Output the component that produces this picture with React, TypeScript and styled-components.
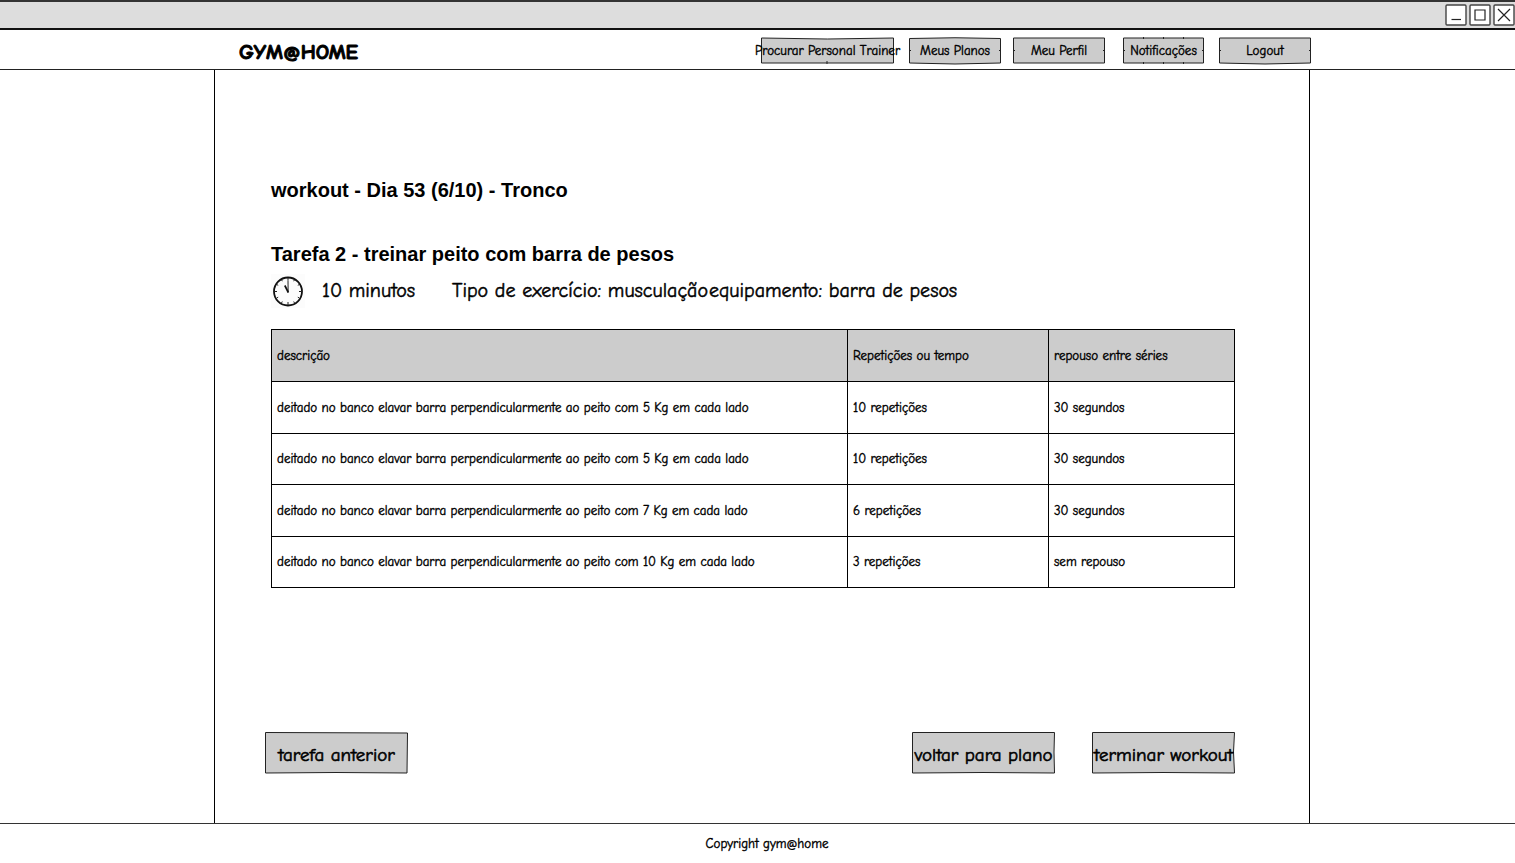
import React from "react";
import styled, { createGlobalStyle } from "styled-components";

const hand = `"Comic Sans MS", "Comic Neue", Lato, "Open Sans", sans-serif`;
const ink = "#000";
const fill = "#ccc";

const GlobalStyle = createGlobalStyle`
  *, *::before, *::after { box-sizing: border-box; }
  body {
    margin: 0;
    background: #fff;
    color: ${ink};
    font-family: ${hand};
    font-size: 13px;
    font-variant-ligatures: none;
    -webkit-text-stroke: 0.4px ${ink};
  }
`;

const Page = styled.div`
  display: flex;
  flex-direction: column;
  min-height: 100vh;
`;

const TitleBar = styled.div`
  display: flex;
  justify-content: flex-end;
  align-items: center;
  gap: 2px;
  height: 30px;
  background: #ddd;
  border-top: 2px solid #333;
  border-bottom: 2px solid #111;
`;

const WindowButton = styled.button`
  display: flex;
  width: 22px;
  height: 22px;
  padding: 0;
  border: 0;
  background: none;
`;

const Header = styled.header`
  display: flex;
  justify-content: space-between;
  align-items: center;
  height: 40px;
  padding: 2px 204px 0 239px;
  border-bottom: 1px solid #222;
`;

const Logo = styled.a`
  color: ${ink};
  font-size: 21px;
  font-weight: 700;
  line-height: 32px;
  text-decoration: none;
  padding-top: 2px;
  -webkit-text-stroke: 1px ${ink};
`;

const Nav = styled.nav`
  display: grid;
  grid-template-columns: 148px 104px 110px 96px 92px;
`;

const SketchButton = styled.button<{ $width: number; $large?: boolean }>`
  position: relative;
  display: flex;
  justify-content: center;
  align-items: center;
  width: ${(p) => p.$width}px;
  height: ${(p) => (p.$large ? 42 : 27)}px;
  padding: ${(p) => (p.$large ? "4px" : "0")} 0 0;
  border: 0;
  background: none;
  color: ${ink};
  font-family: inherit;
  font-size: ${(p) => (p.$large ? 19 : 13)}px;
  font-weight: inherit;
  font-variant-ligatures: none;
  -webkit-text-stroke: ${(p) => (p.$large ? "0.6px" : "0.4px")} ${ink};
  white-space: nowrap;
  cursor: pointer;
`;

const Outline = styled.svg`
  position: absolute;
  inset: 0;
  width: 100%;
  height: 100%;
  overflow: visible;
`;

const Label = styled.span`
  position: relative;
`;

const Main = styled.main`
  display: flex;
  flex: 1;
  flex-direction: column;
  margin: 0 205px 0 214px;
  padding: 108px 74px 49px 56px;
  border: solid ${ink};
  border-width: 0 1px;
`;

const Heading = styled.h1`
  margin: 0 0 40px;
  font: bold 20px/24px "Liberation Sans", Arial, sans-serif;
  -webkit-text-stroke: 0;
`;

const TaskHeading = styled(Heading).attrs({ as: "h2" })`
  margin-bottom: 8px;
`;

const Facts = styled.div`
  display: grid;
  grid-template-columns: 51px 130px 257px auto;
  align-items: center;
  height: 34px;
  font-size: 20px;
  -webkit-text-stroke: 0.5px ${ink};
  line-height: 28px;
  white-space: nowrap;
`;

const Table = styled.table`
  width: 100%;
  height: 259px;
  margin-top: 21px;
  border-collapse: collapse;
  table-layout: fixed;

  th, td {
    height: 51px;
    padding: 0 5px;
    border: 1px solid ${ink};
    text-align: left;
    font-weight: inherit;
  }

  thead { background: ${fill}; }
  th { height: 52px; }
`;

const Column = styled.col<{ $width?: number }>`
  width: ${(p) => (p.$width ? `${p.$width}px` : "auto")};
`;

const Actions = styled.div`
  display: flex;
  gap: 37px;
  margin: auto 0 0 -6px;

  button:first-child { margin-right: auto; }
`;

const Footer = styled.footer`
  height: 40px;
  padding-left: 19px;
  border-top: 1px solid #333;
  line-height: 40px;
  text-align: center;
`;

type ButtonProps = { label: string; width: number; large?: boolean; outline: string; ticks?: string };

function Button({ label, width, large, outline, ticks }: ButtonProps) {
  return (
    <SketchButton type="button" $width={width} $large={large}>
      <Outline viewBox={`0 0 ${width} ${large ? 42 : 27}`} preserveAspectRatio="none" aria-hidden="true">
        <path d={outline} fill={fill} stroke="#222" strokeLinejoin="round" />
        {ticks && <path d={ticks} stroke="#222" />}
      </Outline>
      <Label>{label}</Label>
    </SketchButton>
  );
}

const nav: ButtonProps[] = [
  { label: "Procurar Personal Trainer", width: 133, outline: "M.5 1 Q66 3 132.5 1 V26 H.5Z", ticks: "M66 24V27" },
  { label: "Meus Planos", width: 92, outline: "M.5 1.5 Q46 0 91.5 1.5 V26 Q46 28 .5 26Z", ticks: "M0 13.5H2M90 13.5H92" },
  { label: "Meu Perfil", width: 92, outline: "M.5 1H91.5V26H.5Z", ticks: "M0 13.5H2M90 13.5H92" },
  { label: "Notificações", width: 81, outline: "M.5 1H80.5V26H.5Z", ticks: "M0 13.5H2M79 13.5H81M20.5 0V2M40.5 0V2M60.5 0V2M20.5 25V27M40.5 25V27M60.5 25V27" },
  { label: "Logout", width: 92, outline: "M.5 1H91.5V26Q46 28 .5 26Z", ticks: "M0 13.5H2M90 13.5H92" },
];

const lift = (kg: number) => `deitado no banco elavar barra perpendicularmente ao peito com ${kg} Kg em cada lado`;

const rows = [
  [lift(5), "10 repetições", "30 segundos"],
  [lift(5), "10 repetições", "30 segundos"],
  [lift(7), "6 repetições", "30 segundos"],
  [lift(10), "3 repetições", "sem repouso"],
];

const windowControls = [
  { name: "Minimizar", d: "M6.5 15.5H16" },
  { name: "Maximizar", d: "M6 6H16V16H6Z" },
  { name: "Fechar", d: "M5 5L17 17M17 5L5 17" },
];

function Clock() {
  return (
    <svg width="34" height="34" viewBox="0 0 34 34" aria-hidden="true">
      <rect width="34" height="34" fill="#fcfcfc" />
      <circle cx="17" cy="17.500" r="14" fill="none" stroke="#111" strokeWidth="1.8" />
      <path d="M17 4V6.5M17 28V31M3 17.500H6M28 17.500H31M10.500 5.700L11.300 7.200M23.500 5.700L22.700 7.200M5.700 10.500L7.200 11.300M28.300 10.500L26.800 11.300M5.700 24L7.200 23.200M28.300 24L26.800 23.200M10.500 29L11.300 27.500M23.500 29L22.700 27.500" stroke="#222" />
      <path d="M17.200 18.500L17 6.500" stroke="#555" strokeWidth="1.300" />
      <path d="M17.300 18.500L13.800 11.500" stroke="#111" strokeWidth="1.700" />
    </svg>
  );
}

export default function App() {
  return (
    <Page>
      <GlobalStyle />
      <TitleBar>
        {windowControls.map((c) => (
          <WindowButton key={c.name} type="button" aria-label={c.name}>
            <svg width="22" height="22" viewBox="0 0 22 22" aria-hidden="true">
              <rect x="1" y="1" width="20" height="20" rx="1" fill="#fff" stroke="#444" strokeWidth="1.4" />
              <path d={c.d} fill="none" stroke="#222" strokeWidth="1.2" />
            </svg>
          </WindowButton>
        ))}
      </TitleBar>
      <Header>
        <Logo href="#">GYM@HOME</Logo>
        <Nav>
          {nav.map((b) => <Button key={b.label} {...b} />)}
        </Nav>
      </Header>
      <Main>
        <Heading>workout - Dia 53 (6/10) - Tronco</Heading>
        <TaskHeading>Tarefa 2 - treinar peito com barra de pesos</TaskHeading>
        <Facts>
          <Clock />
          <span>10 minutos</span>
          <span>Tipo de exercício: musculação</span>
          <span>equipamento: barra de pesos</span>
        </Facts>
        <Table>
          <colgroup>
            <Column />
            <Column $width={201} />
            <Column $width={186} />
          </colgroup>
          <thead>
            <tr>
              <th scope="col">descrição</th>
              <th scope="col">Repetições ou tempo</th>
              <th scope="col">repouso entre séries</th>
            </tr>
          </thead>
          <tbody>
            {rows.map((cells, i) => (
              <tr key={i}>{cells.map((cell, j) => <td key={j}>{cell}</td>)}</tr>
            ))}
          </tbody>
        </Table>
        <Actions>
          <Button large label="tarefa anterior" width={143} outline="M.5 .5L142.500 1L142 41L71 40.500L.5 41Z" />
          <Button large label="voltar para plano" width={143} outline="M.5 .5H142.500L142 20L142.500 41L71 40.500L.5 41Z" />
          <Button large label="terminar workout" width={143} outline="M.5 .5H142.500L141.500 20L142.500 41L71 40.500L.5 41Z" />
        </Actions>
      </Main>
      <Footer>Copyright gym@home</Footer>
    </Page>
  );
}
